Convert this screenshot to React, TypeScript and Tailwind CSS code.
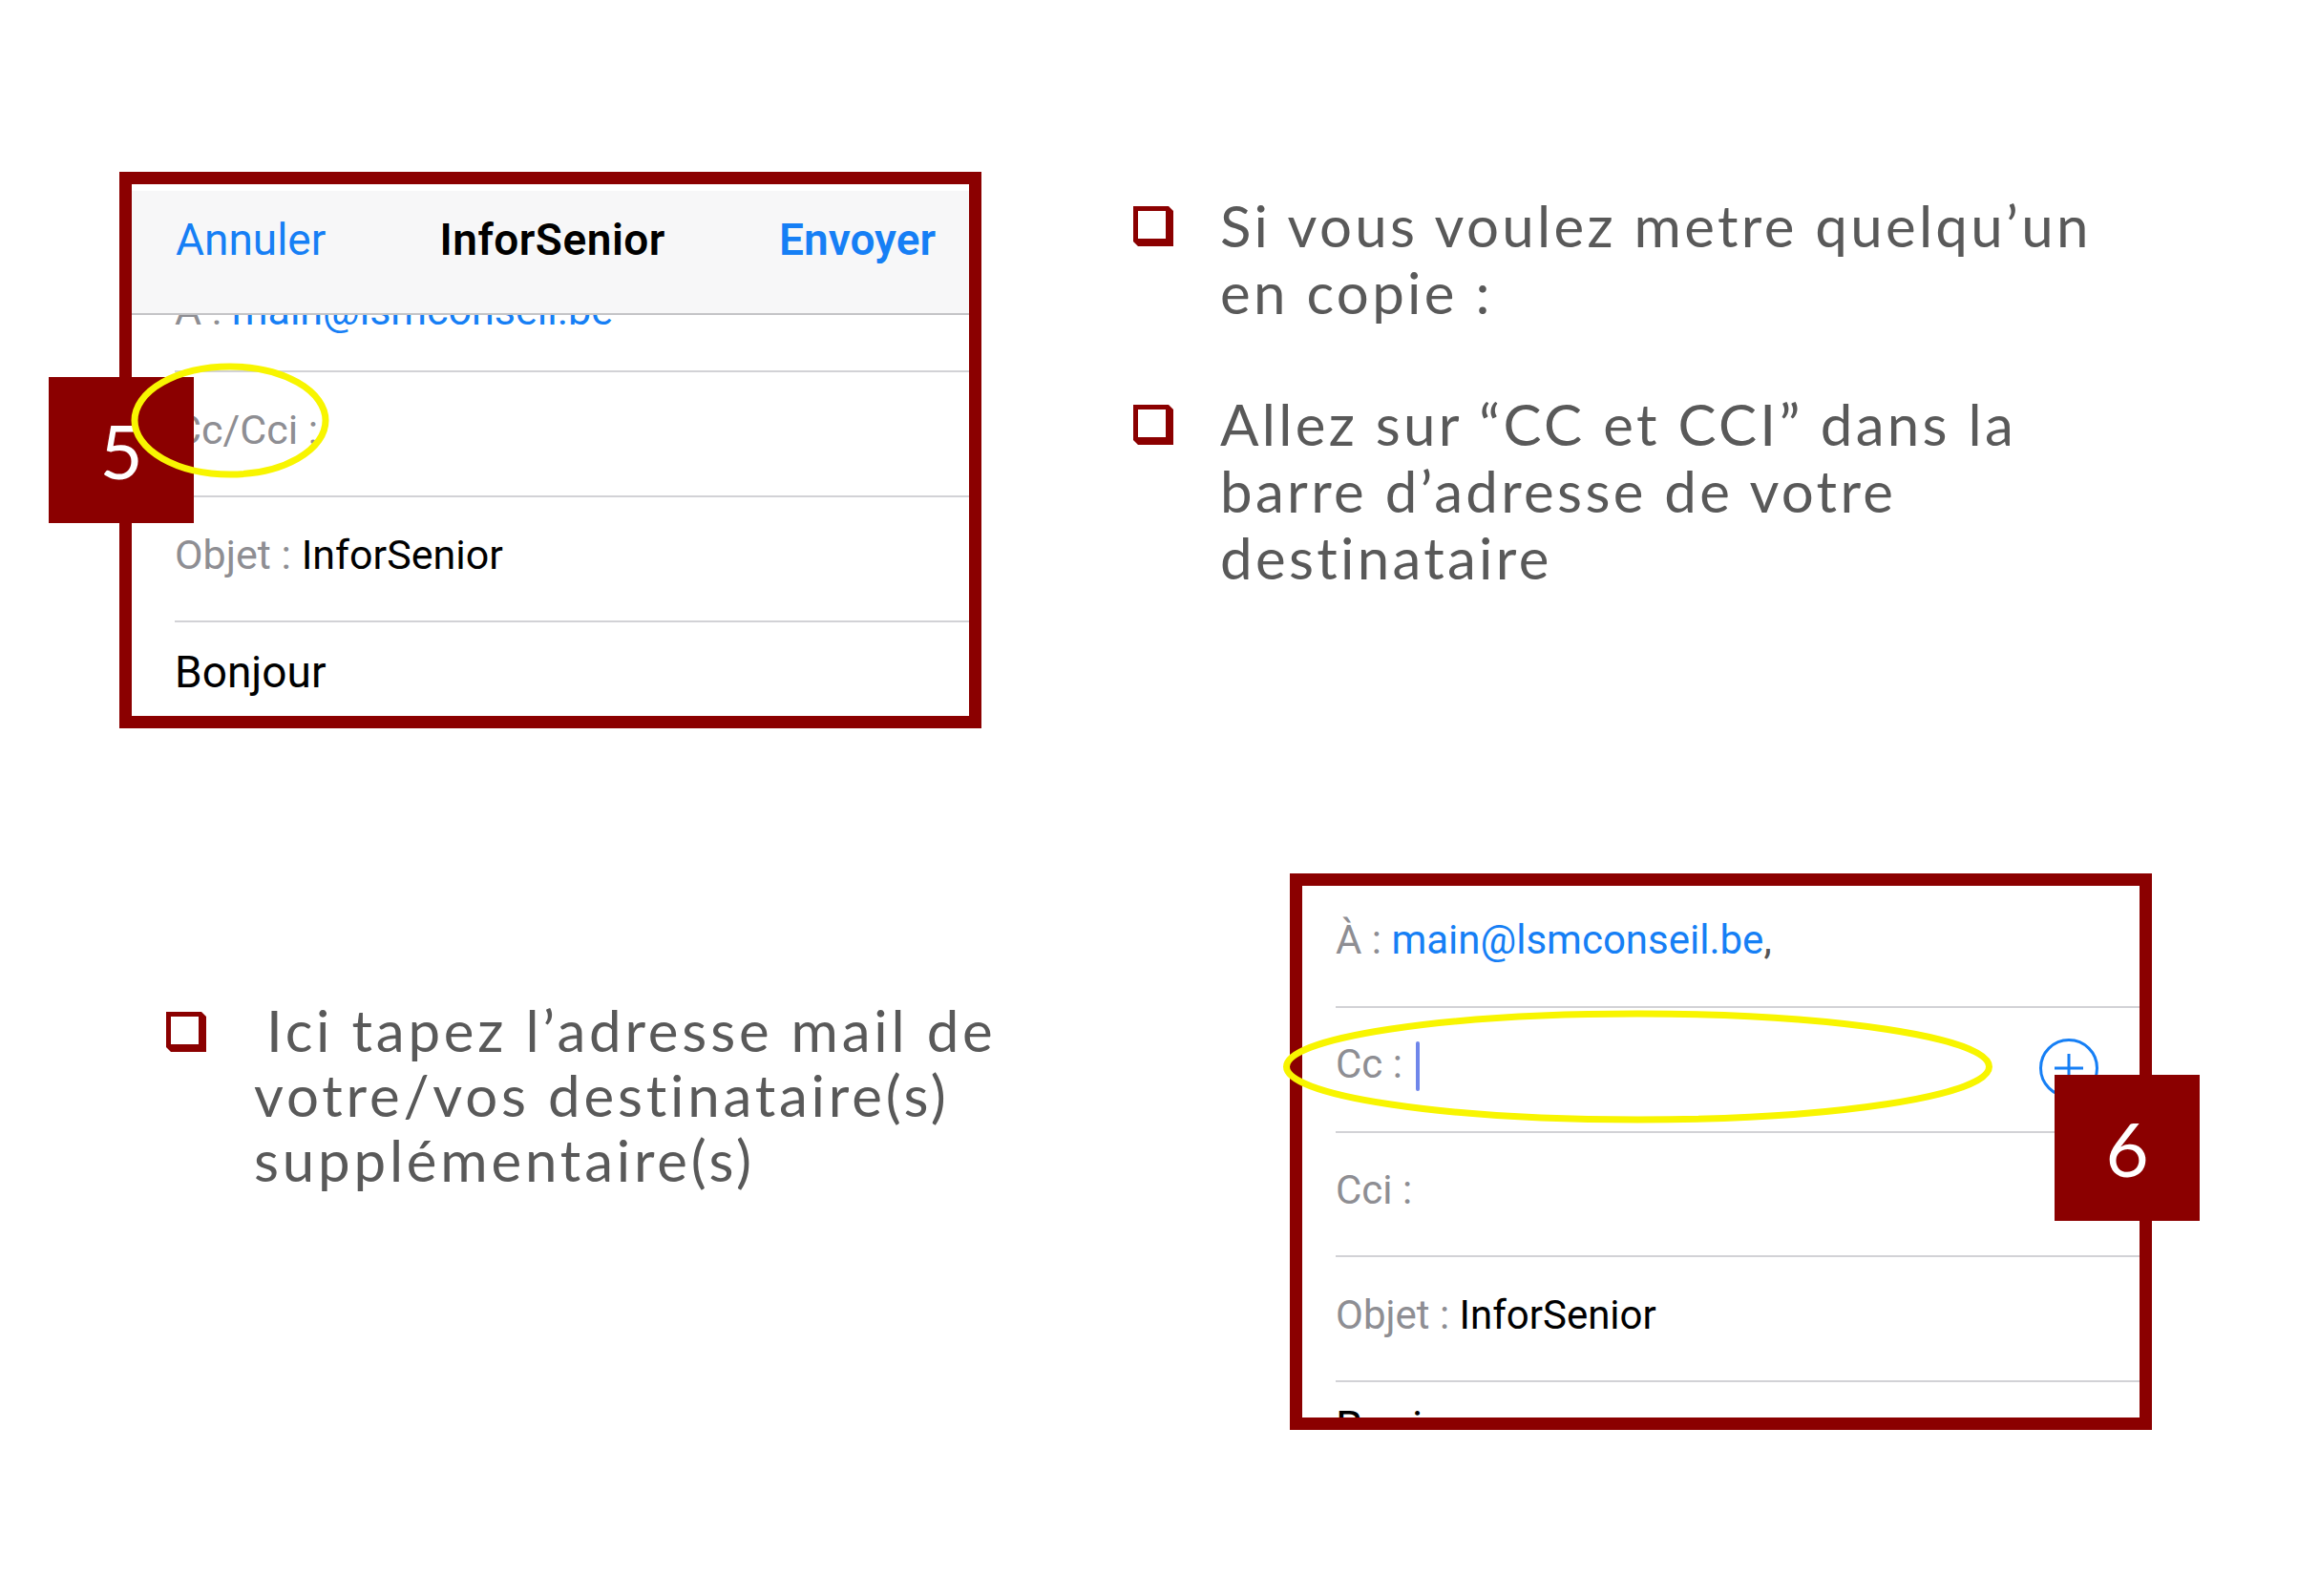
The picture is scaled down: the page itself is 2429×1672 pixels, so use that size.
import type { ReactNode } from 'react'

// iOS screenshot text uses a neutral grotesk; the slide text uses a rounder face.
const IOS = "font-['Roboto','Liberation_Sans',sans-serif]"

function Bullet() {
  return (
    <svg width="42" height="42" viewBox="0 0 42 42" className="shrink-0" aria-hidden="true">
      <path d="M0 0H37L42 5V42H5L0 37Z" fill="#8b0000" />
      <rect x="5" y="5" width="29" height="29" fill="#fff" />
    </svg>
  )
}

function Point({ lines, gap, indent = 0, lead = 70 }: { lines: string[]; gap: number; indent?: number; lead?: number }) {
  return (
    <div className="flex items-start">
      <div className="mt-[15px]">
        <Bullet />
      </div>
      <p
        className={[
          'text-[60px] text-[#595959] whitespace-nowrap',
          lead === 70 ? 'leading-[70px] tracking-[3.3px]' : 'leading-[68px] tracking-[3.8px]',
          gap === 49 ? 'ml-[49px]' : 'ml-[50px]',
        ].join(' ')}
      >
        {lines.map((l, i) => (
          <span key={i} className={i === 0 && indent ? 'block pl-[13px]' : 'block'}>
            {l}
          </span>
        ))}
      </p>
    </div>
  )
}

function Badge({ n, className }: { n: string; className: string }) {
  return (
    <div
      className={[
        'absolute w-[152px] h-[153px] bg-[#8b0000] flex items-center justify-center',
        "text-white text-[78px] font-normal leading-none font-['Lato',sans-serif]",
        className,
      ].join(' ')}
    >
      {n}
    </div>
  )
}

function Row({ children, className }: { children: ReactNode; className: string }) {
  return <div className={'border-b-2 border-[#d2d2d6] ' + className}>{children}</div>
}

const Label = ({ children }: { children: ReactNode }) => <span className="text-[#8e8e93]">{children}</span>

function ComposeTop() {
  return (
    <div className="relative w-[903px] h-[583px] shrink-0">
      <div className={'w-full h-full border-[13px] border-[#8b0000] bg-white overflow-hidden ' + IOS}>
        <div className="h-[7px]" />
        <div className="h-[130px] bg-[#f7f7f8] border-b-2 border-[#c4c4c7] flex items-start justify-between pt-[28px] pl-[46px] pr-[35px] text-[46px] leading-none">
          <span className="text-[#167ff5]">Annuler</span>
          <span className="text-black font-semibold tracking-[0.5px]">InforSenior</span>
          <span className="text-[#167ff5] font-semibold">Envoyer</span>
        </div>
        <Row className="h-[60px] ml-[45px] overflow-hidden">
          <div className="-mt-[26px] text-[43px] leading-none whitespace-nowrap">
            <Label>À : </Label>
            <span className="text-[#167ff5]">main@lsmconseil.be</span>
          </div>
        </Row>
        <Row className="h-[131px] ml-[45px] pt-[39px] text-[43px] leading-none">
          <Label>Cc/Cci :</Label>
        </Row>
        <Row className="h-[131px] ml-[45px] pt-[39px] text-[43px] leading-none">
          <Label>Objet : </Label>
          <span className="text-black">InforSenior</span>
        </Row>
        <div className="ml-[45px] pt-[29px] text-[46px] leading-none text-black">Bonjour</div>
      </div>
      <Badge n="5" className="left-[-74px] top-[215px]" />
      <svg className="absolute left-[12px] top-[200px]" width="208" height="121" viewBox="0 0 208 121" aria-hidden="true">
        <ellipse cx="104" cy="60.5" rx="100" ry="56.5" fill="none" stroke="#f8f500" strokeWidth="7" />
      </svg>
    </div>
  )
}

function ComposeBottom() {
  return (
    <div className="relative w-[903px] h-[583px] shrink-0">
      <div className={'w-full h-full border-[13px] border-[#8b0000] bg-white overflow-hidden ' + IOS}>
        <Row className="h-[128px] ml-[35px] pt-[36px] text-[42px] leading-none whitespace-nowrap">
          <Label>À : </Label>
          <span className="text-[#167ff5]">main@lsmconseil.be</span>
          <span className="text-[#555]">,</span>
        </Row>
        <Row className="h-[131px] ml-[35px] pt-[38px] flex items-start text-[42px] leading-none">
          <Label>Cc :</Label>
          <span className="ml-[14px] -mt-[3px] w-[4px] h-[52px] rounded-full bg-[#6f86ea]" />
          <svg className="ml-auto mr-[42px] -mt-[7px]" width="64" height="64" viewBox="0 0 64 64" aria-hidden="true">
            <circle cx="32" cy="32" r="29.5" fill="none" stroke="#167ff5" strokeWidth="3" />
            <path d="M17 32H47M32 17V47" stroke="#167ff5" strokeWidth="3" />
          </svg>
        </Row>
        <Row className="h-[130px] ml-[35px] pt-[39px] text-[42px] leading-none">
          <Label>Cci :</Label>
        </Row>
        <Row className="h-[131px] ml-[35px] pt-[40px] text-[42px] leading-none">
          <Label>Objet : </Label>
          <span className="text-black">InforSenior</span>
        </Row>
        <div className="ml-[35px] pt-[24px] text-[46px] leading-none text-black">Bonjour</div>
      </div>
      <svg className="absolute left-[-8px] top-[143px]" width="745" height="119" viewBox="0 0 745 119" aria-hidden="true">
        <ellipse cx="372.5" cy="59.5" rx="368" ry="55.5" fill="none" stroke="#f8f500" strokeWidth="7" />
      </svg>
      <Badge n="6" className="left-[801px] top-[211px]" />
    </div>
  )
}

export default function App() {
  return (
    <div className="w-[2429px] h-[1672px] bg-white overflow-hidden font-['Lato',sans-serif]">
      <div className="flex items-start pt-[180px] pl-[125px]">
        <ComposeTop />
        <div className="ml-[159px] mt-[21px] flex flex-col gap-[68px]">
          <Point gap={49} lines={['Si vous voulez metre quelqu’un', 'en copie :']} />
          <Point gap={49} lines={['Allez sur “CC et CCI” dans la', 'barre d’adresse de votre', 'destinataire']} />
        </div>
      </div>
      <div className="flex items-start mt-[152px] pl-[174px]">
        <div className="w-[1177px] shrink-0 pt-[130px]">
          <Point
            gap={50}
            indent={15}
            lead={68}
            lines={['Ici tapez l’adresse mail de', 'votre/vos destinataire(s)', 'supplémentaire(s)']}
          />
        </div>
        <ComposeBottom />
      </div>
    </div>
  )
}
